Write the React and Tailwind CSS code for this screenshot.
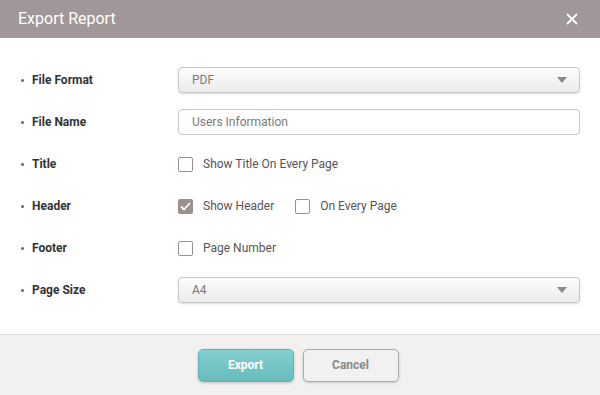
import { useState } from 'react'

const FONT = { fontFamily: 'Roboto, "Liberation Sans", sans-serif' }

function Caret() {
  return (
    <svg width="10" height="6" viewBox="0 0 10 6" className="absolute right-[12px] top-1/2 -translate-y-1/2">
      <path d="M0 0 L10 0 L5 6 Z" fill="#8a8a8a" />
    </svg>
  )
}

function SelectBox({ value }) {
  return (
    <div className="relative h-[26px] w-full rounded-[4px] border border-[#c8c8c8] bg-gradient-to-b from-[#fdfdfd] to-[#ebebeb] shadow-[0_1px_2px_rgba(0,0,0,0.15)] flex items-center pl-[13px] text-[12px] text-[#7a7a7a]">
      {value}
      <Caret />
    </div>
  )
}

function Check({ checked, label, onClick }) {
  return (
    <button type="button" onClick={onClick} className="flex items-center gap-[10px]">
      {checked ? (
        <span className="w-[15px] h-[15px] rounded-[2px] bg-[#9b8f8f] flex items-center justify-center">
          <svg width="11" height="9" viewBox="0 0 11 9">
            <path d="M1 4.5 L4 7.5 L10 1" stroke="#fff" strokeWidth="1.8" fill="none" />
          </svg>
        </span>
      ) : (
        <span className="w-[15px] h-[15px] rounded-[2px] border-[1.5px] border-[#9b8f8f] bg-white" />
      )}
      <span className="text-[12px] text-[#555]">{label}</span>
    </button>
  )
}

function Row({ label, children }) {
  return (
    <div className="flex items-center h-[42px]">
      <div className="w-[178px] flex items-center pl-[21px] text-[12px] font-bold text-[#333]">
        <span className="w-[3px] h-[3px] rounded-full bg-[#666] mr-[8px]" />
        {label}
      </div>
      <div className="flex-1 pr-[20px]">{children}</div>
    </div>
  )
}

export default function App() {
  const [opts, setOpts] = useState({ title: false, header: true, every: false, page: false })
  const toggle = k => setOpts(prev => ({ ...prev, [k]: !prev[k] }))

  return (
    <div className="w-[600px] h-[395px] bg-white flex flex-col overflow-hidden" style={FONT}>
      <div className="h-[38px] bg-[#a19798] flex items-center justify-between pl-[18px] pr-[22px]">
        <span className="text-white text-[16px]">Export Report</span>
        <svg width="12" height="12" viewBox="0 0 12 12">
          <path d="M1 1 L11 11 M11 1 L1 11" stroke="#fff" strokeWidth="1.8" />
        </svg>
      </div>

      <div className="flex-1 pt-[21px]">
        <Row label="File Format"><SelectBox value="PDF" /></Row>
        <Row label="File Name">
          <input
            defaultValue="Users Information"
            className="h-[26px] w-full rounded-[4px] border border-[#c8c8c8] bg-white pl-[13px] text-[12px] text-[#7a7a7a] outline-none"
          />
        </Row>
        <Row label="Title">
          <Check checked={opts.title} label="Show Title On Every Page" onClick={() => toggle('title')} />
        </Row>
        <Row label="Header">
          <div className="flex items-center gap-[21px]">
            <Check checked={opts.header} label="Show Header" onClick={() => toggle('header')} />
            <Check checked={opts.every} label="On Every Page" onClick={() => toggle('every')} />
          </div>
        </Row>
        <Row label="Footer">
          <Check checked={opts.page} label="Page Number" onClick={() => toggle('page')} />
        </Row>
        <Row label="Page Size"><SelectBox value="A4" /></Row>
      </div>

      <div className="h-[61px] border-t border-[#dcdcdc] bg-[#f2f1f0] flex items-center justify-center gap-[9px] pr-[4px]">
        <button className="w-[96px] h-[33px] rounded-[5px] border border-[#5bb3b3] bg-gradient-to-b from-[#84cfcf] to-[#67bcbc] text-white text-[12px] font-bold shadow-[0_1px_3px_rgba(0,0,0,0.2)]">
          Export
        </button>
        <button className="w-[96px] h-[33px] rounded-[5px] border border-[#a8a8a8] bg-[#f1f1f1] text-[#8a8a8a] text-[12px] font-bold shadow-[0_1px_3px_rgba(0,0,0,0.15)]">
          Cancel
        </button>
      </div>
    </div>
  )
}
